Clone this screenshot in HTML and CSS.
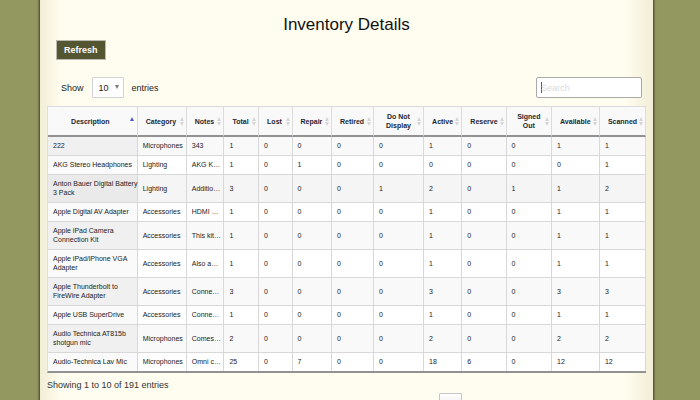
FILE: index.html
```html
<!DOCTYPE html>
<html lang="en">
<head>
<meta charset="utf-8">
<title>Inventory Details</title>
<link rel="stylesheet" href="styles.css">
</head>
<body>
<main class="page">
  <h1>Inventory Details</h1>
  <button class="refresh" type="button">Refresh</button>
  <div class="controls">
    <div class="length">
      <label for="length">Show</label>
      <span class="select-box"><select id="length"><option>10</option><option>25</option><option>50</option></select></span>
      <span>entries</span>
    </div>
    <input class="search" type="search" placeholder="Search" aria-label="Search">
  </div>
  <table class="inventory">
    <colgroup>
      <col class="c-description"><col class="c-category"><col class="c-notes"><col class="c-total"><col class="c-lost"><col class="c-repair"><col class="c-retired"><col class="c-display"><col class="c-active"><col class="c-reserve"><col class="c-signed"><col class="c-available"><col class="c-scanned">
    </colgroup>
    <thead>
      <tr><th class="asc">Description</th><th>Category</th><th>Notes</th><th>Total</th><th>Lost</th><th>Repair</th><th>Retired</th><th>Do Not Display</th><th>Active</th><th>Reserve</th><th>Signed Out</th><th>Available</th><th>Scanned</th></tr>
    </thead>
    <tbody>
      <tr><td>222</td><td>Microphones</td><td>343</td><td>1</td><td>0</td><td>0</td><td>0</td><td>0</td><td>1</td><td>0</td><td>0</td><td>1</td><td>1</td></tr>
      <tr><td>AKG Stereo Headphones</td><td>Lighting</td><td>AKG K…</td><td>1</td><td>0</td><td>1</td><td>0</td><td>0</td><td>0</td><td>0</td><td>0</td><td>0</td><td>1</td></tr>
      <tr class="current"><td>Anton Bauer Digital Battery<br>3 Pack</td><td>Lighting</td><td>Additio…</td><td>3</td><td>0</td><td>0</td><td>0</td><td>1</td><td>2</td><td>0</td><td>1</td><td>1</td><td>2</td></tr>
      <tr><td>Apple Digital AV Adapter</td><td>Accessories</td><td>HDMI …</td><td>1</td><td>0</td><td>0</td><td>0</td><td>0</td><td>1</td><td>0</td><td>0</td><td>1</td><td>1</td></tr>
      <tr><td>Apple iPad Camera<br>Connection Kit</td><td>Accessories</td><td>This kit…</td><td>1</td><td>0</td><td>0</td><td>0</td><td>0</td><td>1</td><td>0</td><td>0</td><td>1</td><td>1</td></tr>
      <tr><td>Apple iPad/iPhone VGA<br>Adapter</td><td>Accessories</td><td>Also a…</td><td>1</td><td>0</td><td>0</td><td>0</td><td>0</td><td>1</td><td>0</td><td>0</td><td>1</td><td>1</td></tr>
      <tr><td>Apple Thunderbolt to<br>FireWire Adapter</td><td>Accessories</td><td>Conne…</td><td>3</td><td>0</td><td>0</td><td>0</td><td>0</td><td>3</td><td>0</td><td>0</td><td>3</td><td>3</td></tr>
      <tr><td>Apple USB SuperDrive</td><td>Accessories</td><td>Conne…</td><td>1</td><td>0</td><td>0</td><td>0</td><td>0</td><td>1</td><td>0</td><td>0</td><td>1</td><td>1</td></tr>
      <tr><td>Audio Technica AT815b<br>shotgun mic</td><td>Microphones</td><td>Comes…</td><td>2</td><td>0</td><td>0</td><td>0</td><td>0</td><td>2</td><td>0</td><td>0</td><td>2</td><td>2</td></tr>
      <tr><td>Audio-Technica Lav Mic</td><td>Microphones</td><td>Omni c…</td><td>25</td><td>0</td><td>7</td><td>0</td><td>0</td><td>18</td><td>6</td><td>0</td><td>12</td><td>12</td></tr>
    </tbody>
  </table>
  <p class="info">Showing 1 to 10 of 191 entries</p>
  <nav class="pages" aria-label="Pages"><button type="button" aria-label="Page 1"></button></nav>
</main>
</body>
</html>
```
FILE: styles.css
```css
* { box-sizing: border-box; }

html { background: #939760; }

body {
  margin: 0;
  padding: 0 47px 0 40px;
  font-family: "Liberation Sans", Arial, sans-serif;
  font-size: 9px;
  color: #222;
  overflow-x: hidden;
}

.page {
  min-height: 100vh;
  padding: 15px 7px 0;
  background:
    linear-gradient(to right, #f2edd6, rgba(255, 253, 240, 0) 22px),
    linear-gradient(to left, #f2edd6, rgba(255, 253, 240, 0) 28px),
    #fffdf0;
  box-shadow: 0 0 2px 1px #3e4025;
}

h1 {
  margin: 0;
  font-size: 17px;
  font-weight: 400;
  line-height: 20px;
  text-align: center;
  color: #111;
}

.refresh {
  display: block;
  height: 20px;
  margin: 5px 9px 0;
  padding: 0 7px;
  border: 1px solid #b9b9b0;
  background: #545632;
  color: #fff;
  font: bold 9px "Liberation Sans", Arial, sans-serif;
}

.controls {
  display: flex;
  justify-content: space-between;
  align-items: center;
  margin: 17px 4px 8px 14px;
}

.length {
  display: flex;
  align-items: center;
  gap: 8px;
}

.select-box { position: relative; }

.select-box::after {
  content: "";
  position: absolute;
  top: 8px;
  right: 5px;
  border: 2px solid transparent;
  border-top: 4px solid #777;
  border-bottom: 0;
  pointer-events: none;
}

.select-box select {
  display: block;
  appearance: none;
  width: 32px;
  height: 21px;
  padding: 0 6px;
  border: 1px solid #d3d3d3;
  border-radius: 1px;
  background: #fff;
  color: #222;
  font: 9px "Liberation Sans", Arial, sans-serif;
}

.search {
  appearance: none;
  width: 106px;
  height: 21px;
  padding: 0 4px;
  border: 1px solid #aaa;
  border-radius: 2px;
  background: linear-gradient(#555, #555) 4px center / 1px 11px no-repeat #fff;
  color: #222;
  font: 9px "Liberation Sans", Arial, sans-serif;
}

.search::placeholder { color: #dcdcdc; }

.inventory {
  width: 100%;
  table-layout: fixed;
  border-collapse: separate;
  border-spacing: 0;
  border-left: 1px solid #ddd;
  border-bottom: 2px solid #929292;
  font-size: 7px;
  line-height: 9px;
  color: #222;
}

.c-description { width: 15%; }
.c-category { width: 8.2%; }
.c-notes { width: 6.3%; }
.c-total { width: 5.8%; }
.c-lost { width: 5.6%; }
.c-repair { width: 6.6%; }
.c-retired { width: 7%; }
.c-display { width: 8.4%; }
.c-active { width: 6.4%; }
.c-reserve { width: 7.4%; }
.c-signed { width: 7.6%; }
.c-available { width: 8%; }
.c-scanned { width: 7.7%; }

.inventory th {
  position: relative;
  height: 31px;
  padding: 0 12px 0 8px;
  border: solid #dcdcdc;
  border-width: 1px 1px 2px 0;
  border-bottom-color: #929292;
  background: #f9f9f9;
  color: #1d2733;
  text-align: center;
}

.inventory th:nth-child(8),
.inventory th:nth-child(11) { padding: 0 10px; }

.inventory th::before,
.inventory th::after {
  content: "";
  position: absolute;
  right: 2px;
  border: solid transparent;
  border-width: 0 2px;
}

.inventory th::before {
  top: 10px;
  border-bottom: 4px solid #d6d6d6;
}

.inventory th::after {
  top: 15px;
  border-top: 4px solid #d6d6d6;
}

.inventory th.asc::before {
  right: 3px;
  border-bottom-color: #4c58d0;
}

.inventory th.asc::after { display: none; }

.inventory td {
  padding: 4px 0 5px 5px;
  border-right: 1px solid #d8d8d8;
  border-bottom: 1px solid #d8d8d8;
  background: #fff;
  white-space: nowrap;
}

.inventory td:first-child { background: #fafafa; }

.inventory tr:nth-child(odd) td { background: #f9f9f9; }
.inventory tr:nth-child(odd) td:first-child { background: #f0f0f0; }
.inventory tbody tr.current td { background: #f5f5f5; }
.inventory tbody tr.current td:first-child { background: #eaeaea; }
.inventory tbody tr:last-child td { border-bottom: 0; }

.info {
  margin: 7px 0 3px;
  line-height: 10px;
  color: #333;
}

.pages {
  display: flex;
  justify-content: flex-end;
  height: 7px;
  padding-right: 184px;
}

.pages button {
  width: 23px;
  height: 22px;
  padding: 0;
  border: 1px solid #c4c4c4;
  border-radius: 1px;
  background: linear-gradient(#fff, #e2e2e2);
}
```
